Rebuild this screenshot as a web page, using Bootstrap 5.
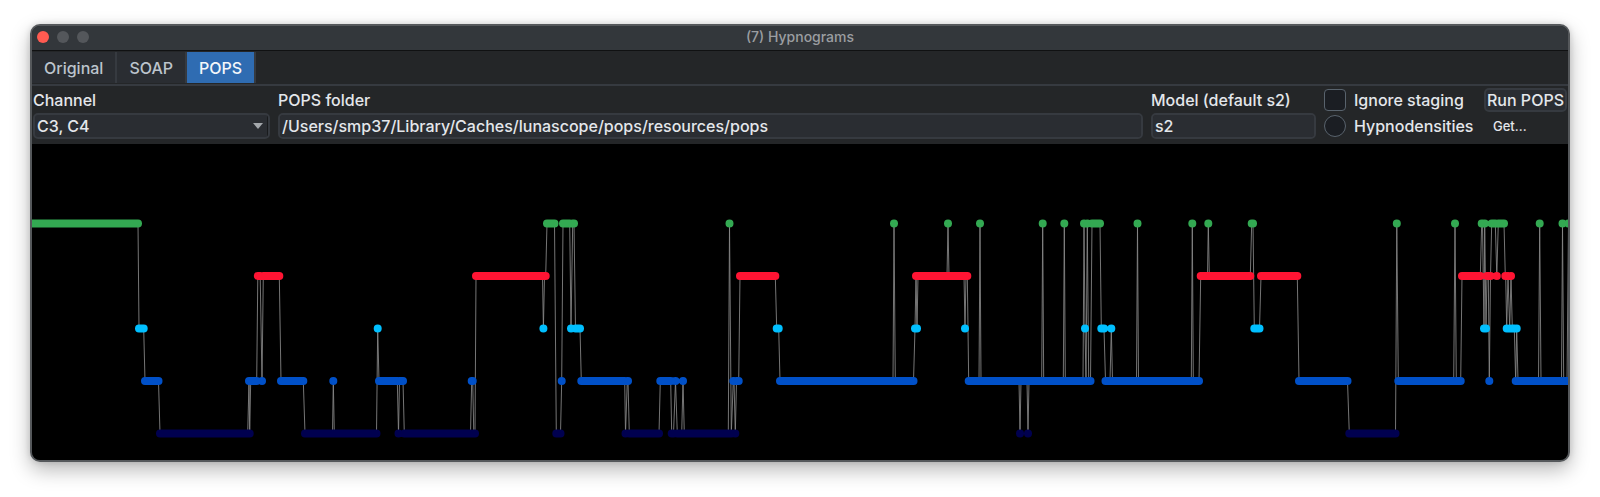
<!DOCTYPE html>
<html lang="en" data-bs-theme="dark">
<head>
<meta charset="utf-8">
<meta name="viewport" content="width=device-width, initial-scale=1">
<title>Hypnograms</title>
<link href="https://cdn.jsdelivr.net/npm/bootstrap@5.3.0/dist/css/bootstrap.min.css" rel="stylesheet">
<style>
  :root { --line: #363a40; --field: #2a2d32; --panel: #242628; }
  html { height: 100%; }
  body { height: 100%; background: #fff; color: #e4e7eb; font-family: Inter, "Liberation Sans", sans-serif; font-size: 16px; font-weight: 500; line-height: 24px; padding: 24px 30px 35px; }
  .app-window { height: 100%; background: var(--panel); border: 2px solid #55585b; border-radius: 10px; overflow: hidden; box-shadow: 0 8px 20px rgba(0,0,0,.28), 0 0 6px rgba(0,0,0,.14); }
  .title-bar { height: 25px; background: #33373b; border-bottom: 1px solid #101112; font-size: 14px; line-height: 20px; color: #9b9ea1; padding-bottom: 2px; }
  .lights { left: 5px; gap: 8px; }
  .light { width: 12px; height: 12px; border-radius: 50%; background: #54575b; }
  .light-close { background: #ff5b51; }
  .tab-strip { height: 35px; border-bottom: 2px solid var(--line); padding-top: 1px; }
  .tab-strip .nav-link { height: 31px; padding: 0 12px; border-radius: 0; border-right: 2px solid var(--line); background: var(--field); color: #bcc4cc; line-height: 32px; }
  .tab-strip .nav-link.active { background: #2f6cb2; color: #f4f7fa; }
  .controls { display: grid; grid-template-columns: 237px minmax(0, 1fr) 165px 152px 83px; grid-template-rows: 24px 26px; column-gap: 8px; row-gap: 1px; padding: 2px 1px 5px; }
  .controls .form-control, .controls .form-select { height: 26px; min-height: 0; padding: 0 2px; border: 2px solid var(--line); border-radius: 5px; background-color: var(--field); color: #e4e7eb; font-size: 16px; font-weight: 500; line-height: 22px; }
  .controls .form-select { background-image: linear-gradient(#191b1d, #191b1d), url("data:image/svg+xml,%3Csvg xmlns='http://www.w3.org/2000/svg' width='10' height='6'%3E%3Cpath d='M0 0h10L5 6z' fill='%23a4a8ac'/%3E%3C/svg%3E"); background-repeat: no-repeat; background-size: 1px 22px, 10px 6px; background-position: right 0 top 0, right 5px top 8px; }
  .option { gap: 8px; }
  .controls .form-check-input { width: 22px; height: 22px; margin: 0; border: 1px solid #59636d; background-color: #1b1e23; }
  .controls .form-check-input[type=checkbox] { border-radius: 4px; }
  .run-btn { height: 24px; padding: 0; border: 2px solid var(--line); border-radius: 5px; background: var(--field); color: #e4e7eb; font-size: 16px; font-weight: 500; line-height: 20px; }
  .get-btn { padding: 0 9px; border: 0; color: #e4e7eb; font-size: 13px; font-weight: 500; line-height: 24px; }
  .plot { min-height: 0; background: #000; }
  .plot path { fill: none; vector-effect: non-scaling-stroke; }
  .trace { stroke: #8a8a8a; stroke-width: 1; stroke-opacity: .85; }
  .stage { stroke-width: 8; stroke-linecap: round; }
</style>
</head>
<body>
<main class="app-window d-flex flex-column">
  <header class="title-bar position-relative d-flex align-items-center justify-content-center flex-shrink-0">
    <div class="lights position-absolute d-flex">
      <span class="light light-close"></span><span class="light"></span><span class="light"></span>
    </div>
    <span>(7) Hypnograms</span>
  </header>
  <nav class="tab-strip nav flex-nowrap flex-shrink-0">
    <a class="nav-link" href="#original">Original</a>
    <a class="nav-link" href="#soap">SOAP</a>
    <a class="nav-link active" href="#pops" aria-current="page">POPS</a>
  </nav>
  <form class="controls flex-shrink-0 text-nowrap">
    <label for="channel">Channel</label>
    <label for="folder">POPS folder</label>
    <label for="model">Model (default s2)</label>
    <div class="option d-flex align-items-center">
      <input class="form-check-input" type="checkbox" id="ignore"><label for="ignore">Ignore staging</label>
    </div>
    <button type="button" class="btn run-btn">Run POPS</button>
    <select class="form-select" id="channel"><option>C3, C4</option></select>
    <input class="form-control" type="text" id="folder" value="/Users/smp37/Library/Caches/lunascope/pops/resources/pops">
    <input class="form-control" type="text" id="model" value="s2">
    <div class="option d-flex align-items-center">
      <input class="form-check-input" type="radio" id="hypno"><label for="hypno">Hypnodensities</label>
    </div>
    <button type="button" class="btn get-btn text-start">Get...</button>
  </form>
  <svg class="plot flex-grow-1 w-100" viewBox="32 144 1536 316" preserveAspectRatio="none" role="img" aria-label="Hypnogram"></svg>
</main>
<script src="https://cdn.jsdelivr.net/npm/bootstrap@5.3.0/dist/js/bootstrap.bundle.min.js"></script>
<script>
  // Vertical level and colour of each sleep stage.
  const stages = {
    W: [223.5, '#33a952'], R: [276, '#ff1433'], N1: [328.5, '#00bfff'], N2: [381, '#0050c8'], N3: [433.5, '#00004f']
  };
  // Consecutive runs: stage, start, end (a single epoch has no end).
  const runs = `W 20 138;N1 139 143.7;N2 145 158.5;N3 160 247.7;N2 249;N3 249.7;N2 250.7 256.7;R 257.8 260.2;N2 262;
    R 263.3 279.3;N2 281 303.3;N3 305 332.5;N2 333.3;N3 334.3 376.5;N1 377.7;N2 379 397.3;N3 398.5;N2 399.5 403;N3 404.3 470.5;
    N2 471.7 472.7;N3 473.8 475;R 476 542.5;N1 543.4;R 544.5 545.7;W 547 554.5;N3 556.3 560.5;N2 561.7;W 563 569.7;N1 571;
    W 572.7 574;N1 575.5 580;N2 581.3 624.7;N3 625.5;N2 627.3 628;N3 629.3 659;N2 660.3 670.7;N3 671.7 673.5;N2 675.5;
    N3 677.3 681.7;N2 683;N3 684.3 728.3;W 729.5;N3 731.3;N2 733.3 734;N3 735.3;N2 736.5 738.7;R 740 775.3;N1 776.7 778.7;
    N2 780 893;W 894;N2 895.3 913.5;N1 915;R 916;N1 917;R 918 947;W 948;R 949 964;N1 965;R 966 967.3;N2 968.7 979;W 980;
    N2 981 1019;N3 1020;N2 1021 1027;N3 1028;N2 1029 1041.7;W 1042.7;N2 1043.7 1063.3;W 1064.3;N2 1065.3 1083;W 1084;
    N1 1085;N2 1086;W 1087.3;N2 1088.7 1090.5;W 1092 1100;N1 1101.3 1104;N2 1105.5 1110;N1 1111.3;N2 1112.5 1136.5;W 1137.5;
    N2 1138.5 1191.3;W 1192.3;N2 1193.3 1199;R 1200.7 1207.5;W 1208.3;R 1209.3 1250.3;W 1251.7 1253;N1 1254.3 1259.5;
    R 1261 1297.3;N2 1299 1347.5;N3 1349.3 1395.5;W 1396.8;N2 1398.3 1453.7;W 1455;N2 1456.3 1460.7;R 1462 1480.3;
    W 1481.7 1482.5;N1 1484;W 1484.7;N1 1486;R 1487 1488.3;N2 1489.3;R 1490.5;W 1491.7 1495.3;R 1496.8;W 1498.3 1504;
    R 1505.3 1505.7;N1 1506.7;R 1508;N1 1509.7;R 1511;N1 1512.3 1514.3;N2 1515.7;N1 1516.7;N2 1518 1538.5;W 1539.7;
    N2 1541 1561.5;W 1562.5;N2 1563.7 1567;W 1568.5 1580`
    .split(';').map(r => { const [s, a, b] = r.trim().split(' '); return [s, +a, +(b || a)]; });

  const plot = document.querySelector('.plot');
  function addPath(cls, d, stroke) {
    const p = document.createElementNS('http://www.w3.org/2000/svg', 'path');
    p.setAttribute('class', cls);
    p.setAttribute('d', d);
    if (stroke) p.setAttribute('stroke', stroke);
    plot.append(p);
  }
  addPath('trace', 'M' + runs.map(([s, a, b]) => `${a} ${stages[s][0]}L${b} ${stages[s][0]}`).join('L'));
  for (const [name, [y, colour]] of Object.entries(stages)) {
    addPath('stage', runs.filter(r => r[0] === name).map(([, a, b]) => `M${a} ${y}H${b + 0.01}`).join(''), colour);
  }
</script>
</body>
</html>
